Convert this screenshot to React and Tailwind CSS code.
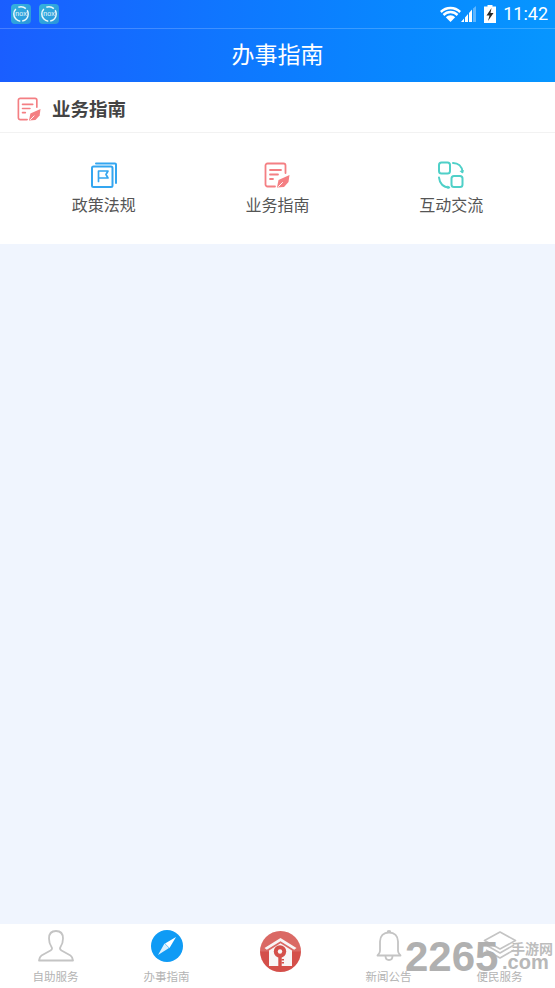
const cjk = { fontFamily: '"Noto Sans CJK SC", "Noto Sans", sans-serif' };

const NoxIcon = () => (
  <div className="w-5 h-5 rounded-[4px] bg-gradient-to-br from-[#35b4dc] to-[#2b94dc] flex items-center justify-center">
    <svg width="18" height="18" viewBox="0 0 18 18" fill="none">
      <circle cx="9" cy="9" r="7.2" stroke="#e8f7fc" strokeWidth="1.5" strokeDasharray="10 2 16 3 8 2" />
      <text x="9" y="11" textAnchor="middle" fontSize="7" fill="#e8f7fc" fontFamily="Liberation Sans">nox</text>
    </svg>
  </div>
);

const GuideIcon = ({ size = 26 }) => (
  <svg width={size} height={size} viewBox="0 0 26 26" fill="none" stroke="#f47f83" strokeWidth="1.8" strokeLinecap="round" strokeLinejoin="round">
    <path d="M11 24.500H3.500a2 2 0 0 1-2-2V3.500a2 2 0 0 1 2-2h16a2 2 0 0 1 2 2V11" />
    <path d="M6 8h11M6 12.500h8M6 17h3" />
    <path d="M13 25.500l1.500-7.500 11-5-1 7-4.500 5z" fill="#f47f83" stroke="none" />
    <path d="M14.500 24.500l4-4" stroke="#ffffff" strokeWidth="1" />
  </svg>
);

const PolicyIcon = () => (
  <svg width="26" height="26" viewBox="0 0 26 26" fill="none" stroke="#34a6f0" strokeWidth="2" strokeLinecap="round" strokeLinejoin="round">
    <rect x="1" y="4.500" width="20.500" height="20.500" rx="1.500" />
    <path d="M5 1.500h19a1 1 0 0 1 1 1V21" />
    <path d="M7.500 19.500V9h9.500l-2 3.500 2 3.500H7.500" strokeWidth="1.700" />
  </svg>
);

const ExchangeIcon = () => (
  <svg width="26" height="28" viewBox="0 0 26 28" fill="none" stroke="#4fd0c8" strokeWidth="2" strokeLinecap="round" strokeLinejoin="round">
    <rect x="1" y="1.500" width="11" height="11" rx="2.500" />
    <rect x="13.500" y="15" width="11" height="11" rx="2.500" />
    <path d="M15 2c5 0 9 3 9.500 9" />
    <path d="M1 16.500c.5 6 4.500 10 10 10" />
    <path d="M21.500 10l3 2.500 1.500-3.500zM9.500 24.500l3 2-3 1.500z" fill="#4fd0c8" stroke="none" />
  </svg>
);

const PersonIcon = () => (
  <svg width="36" height="32" viewBox="0 0 36 32" fill="none" stroke="#c4c4c4" strokeWidth="1.800" strokeLinejoin="round">
    <path d="M11 8.500C11 3.500 14 1 18 1s7 2.500 7 7.500c0 4-1 6.500-2.500 8.500-1 1.500-.5 2.500 1 3.500l9 5c1.500 1 2 2.500 2.500 5H1c.5-2.500 1-4 2.500-5l9-5c1.500-1 2-2 1-3.500C12 15 11 12.500 11 8.500z" />
  </svg>
);

const CompassIcon = () => (
  <svg width="32" height="32" viewBox="0 0 32 32">
    <circle cx="16" cy="16" r="16" fill="#0f9bf5" />
    <path d="M25 7l-11 6.500 4.500 4.500z" fill="#ffffff" />
    <path d="M7 25l11-7-4.500-4.500z" fill="#ffffff" fillOpacity="0.85" />
  </svg>
);

const HomeKeyIcon = () => (
  <svg width="41" height="41" viewBox="0 0 41 41">
    <circle cx="20.500" cy="20.500" r="20.500" fill="#d44f4a" />
    <path d="M0 20.500a20.500 20.500 0 0 1 41 0z" fill="#ffffff" fillOpacity="0.15" />
    <path d="M4.500 17L20.500 7l16 10-2.300 1.700-13.700-8.500-13.700 8.500z" fill="#f8f5f6" />
    <path d="M9 19.500l11.500-7.200L32 19.500V35H9z" fill="#f8f5f6" />
    <circle cx="20" cy="20.500" r="6.200" fill="#d44f4a" />
    <circle cx="20" cy="20.500" r="2.200" fill="#f8f5f6" />
    <path d="M18.300 25h3.400v10h-3.400z" fill="#d44f4a" />
    <path d="M21.500 28h2.500v1.500h-2.500zM21.500 31h2.500v1.500h-2.500z" fill="#d44f4a" />
  </svg>
);

const BellIcon = () => (
  <svg width="26" height="34" viewBox="0 0 26 34" fill="none" stroke="#c4c4c4" strokeWidth="1.800" strokeLinejoin="round">
    <path d="M13 3.500c-5.500 0-9 3.500-9 9V22c0 2-1 3-2.500 4.500h23C23 25 22 24 22 22v-9.500c0-5.500-3.500-9-9-9z" />
    <path d="M11.500 3.500a1.500 1.500 0 1 1 3 0M9.500 27c0 2.500 1.500 4 3.500 4s3.500-1.500 3.500-4" />
  </svg>
);

const LayersIcon = () => (
  <svg width="34" height="30" viewBox="0 0 34 30" fill="none" stroke="#c4c4c4" strokeWidth="1.600" strokeLinejoin="round">
    <path d="M17 1L1.500 9.500 17 18l15.500-8.500z" />
    <path d="M3 14L17 22l14-8" />
    <path d="M3 19L17 27l14-8" />
  </svg>
);

const WifiIcon = () => (
  <svg width="21" height="16" viewBox="0 0 21 16">
    <path d="M0 5a15 15 0 0 1 21 0l-1.700 1.900a12.600 12.600 0 0 0-17.600 0z" fill="#ffffff" />
    <path d="M2.600 8a11 11 0 0 1 15.800 0l-1.700 1.900a8.500 8.500 0 0 0-12.400 0z" fill="#ffffff" />
    <path d="M5.800 11.300a6.600 6.600 0 0 1 9.400 0L10.500 16z" fill="#ffffff" />
  </svg>
);

const SignalIcon = () => (
  <svg width="15" height="16" viewBox="0 0 15 16">
    <path d="M0 16L3 12.500V16zM4 16V11.500L7 8V16zM8 16V7L11 3.500V16z" fill="#ffffff" />
    <path d="M12 16V2.500L15 0V16z" fill="#ffffff" fillOpacity="0.35" />
  </svg>
);

const BatteryIcon = () => (
  <svg width="12" height="18" viewBox="0 0 12 18">
    <path d="M3.500 0h5v1.500H12V18H0V1.500h3.500z" fill="#ffffff" />
    <path d="M7.500 3L2.500 10.500h3L4 16l5.500-8h-3z" fill="#2b2b2b" />
  </svg>
);

const shortcuts = [
  { label: '政策法规', icon: <PolicyIcon /> },
  { label: '业务指南', icon: <GuideIcon /> },
  { label: '互动交流', icon: <ExchangeIcon /> },
];

const tabs = [
  { label: '自助服务', icon: <PersonIcon /> },
  { label: '办事指南', icon: <CompassIcon /> },
  { label: '', icon: <HomeKeyIcon /> },
  { label: '新闻公告', icon: <BellIcon /> },
  { label: '便民服务', icon: <LayersIcon /> },
];

export default function App() {
  return (
    <div className="relative w-[555px] h-[988px] flex flex-col bg-[#f0f5fe] overflow-hidden" style={cjk}>
      {/* Status bar + title */}
      <div className="h-[82px] shrink-0 flex flex-col bg-gradient-to-r from-[#1a5eff] to-[#0796ff]">
        <div className="h-[29px] shrink-0 flex items-center pl-[11px] pr-[7px] border-b border-white/20">
          <div className="flex gap-2">
            <NoxIcon />
            <NoxIcon />
          </div>
          <div className="ml-auto flex items-center">
            <WifiIcon />
            <SignalIcon />
            <div className="ml-2"><BatteryIcon /></div>
            <span className="ml-[7px] text-[18px] leading-none text-white" style={{ fontFamily: 'Roboto, sans-serif' }}>11:42</span>
          </div>
        </div>
        <div className="flex-1 flex items-center justify-center pb-[4px] text-white text-[23px]">办事指南</div>
      </div>

      {/* Section */}
      <div className="bg-white shrink-0">
        <div className="h-[51px] flex items-center pl-[17px] pt-[3px] gap-[11px] border-b border-[#f2f2f2]">
          <GuideIcon size={24} />
          <span className="text-[18.500px] font-bold text-[#444444]">业务指南</span>
        </div>
        <div className="h-[111px] grid grid-cols-3 px-[17px] pt-[28px]">
          {shortcuts.map((s) => (
            <div key={s.label} className="flex flex-col items-center">
              <div className="h-[28px] flex items-center">{s.icon}</div>
              <span className="mt-[4px] text-[16px] leading-[22px] text-[#555555]">{s.label}</span>
            </div>
          ))}
        </div>
      </div>

      <div className="flex-1" />

      {/* Bottom tabs */}
      <div className="h-[64px] shrink-0 bg-white grid grid-cols-5">
        {tabs.map((t, i) => (
          <div key={i} className="flex flex-col items-center pt-[4px]">
            {t.label ? (
              <>
                <div className="h-[36px] flex items-center justify-center">{t.icon}</div>
                <span className="mt-[4px] text-[11.500px] leading-[16px] text-[#b4b4b4]">{t.label}</span>
              </>
            ) : (
              <div className="mt-[3px] ml-[5px]">{t.icon}</div>
            )}
          </div>
        ))}
      </div>

      {/* Watermark */}
      <div className="absolute left-[405px] top-[933px] h-[48px] w-[150px]">
        <span className="absolute left-0 top-0 text-[42px] leading-[48px] font-bold text-[#b0b0b0]" style={{ fontFamily: '"Liberation Sans", sans-serif' }}>2265</span>
        <span className="absolute left-[106px] top-[7px] text-[14px] leading-[16px] font-bold text-[#bdbdbd]">手游网</span>
        <span className="absolute left-[97px] top-[18px] text-[20px] leading-[22px] font-bold text-[#b8b8b8]" style={{ fontFamily: '"Liberation Sans", sans-serif' }}>.com</span>
      </div>
    </div>
  );
}
